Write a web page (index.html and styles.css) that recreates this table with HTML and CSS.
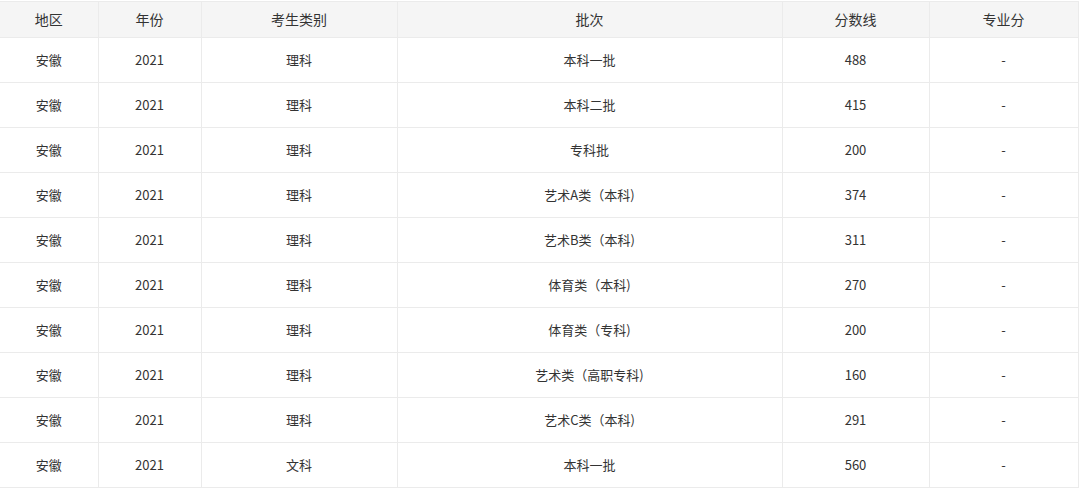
FILE: index.html
```html
<!DOCTYPE html>
<html lang="zh">
<head>
<meta charset="utf-8">
<link rel="stylesheet" href="styles.css">
</head>
<body>
<table class="score-table">
  <colgroup>
    <col class="c1"><col class="c2"><col class="c3"><col class="c4"><col class="c5"><col class="c6">
  </colgroup>
  <thead>
    <tr><th>地区</th><th>年份</th><th>考生类别</th><th>批次</th><th>分数线</th><th>专业分</th></tr>
  </thead>
  <tbody>
    <tr><td>安徽</td><td>2021</td><td>理科</td><td>本科一批</td><td>488</td><td>-</td></tr>
    <tr><td>安徽</td><td>2021</td><td>理科</td><td>本科二批</td><td>415</td><td>-</td></tr>
    <tr><td>安徽</td><td>2021</td><td>理科</td><td>专科批</td><td>200</td><td>-</td></tr>
    <tr><td>安徽</td><td>2021</td><td>理科</td><td>艺术A类（本科)</td><td>374</td><td>-</td></tr>
    <tr><td>安徽</td><td>2021</td><td>理科</td><td>艺术B类（本科)</td><td>311</td><td>-</td></tr>
    <tr><td>安徽</td><td>2021</td><td>理科</td><td>体育类（本科)</td><td>270</td><td>-</td></tr>
    <tr><td>安徽</td><td>2021</td><td>理科</td><td>体育类（专科)</td><td>200</td><td>-</td></tr>
    <tr><td>安徽</td><td>2021</td><td>理科</td><td>艺术类（高职专科)</td><td>160</td><td>-</td></tr>
    <tr><td>安徽</td><td>2021</td><td>理科</td><td>艺术C类（本科)</td><td>291</td><td>-</td></tr>
    <tr><td>安徽</td><td>2021</td><td>文科</td><td>本科一批</td><td>560</td><td>-</td></tr>
  </tbody>
</table>
</body>
</html>
```

FILE: styles.css
```css
html, body {
  margin: 0;
  padding: 0;
  background: #ffffff;
}
body {
  padding-top: 1px;
  font-family: "Noto Sans CJK SC", "Noto Sans", sans-serif;
  color: #333333;
}
.score-table {
  width: 1078px;
  border-collapse: collapse;
  table-layout: fixed;
}
.c1 { width: 98px; }
.c2 { width: 103px; }
.c3 { width: 196px; }
.c4 { width: 385px; }
.c5 { width: 147px; }
.c6 { width: 149px; }
.score-table th,
.score-table td {
  border: 1px solid #ebebeb;
  text-align: center;
  padding: 0;
  font-weight: normal;
}
.score-table tr > :first-child { border-left: none; }
.score-table th {
  height: 33px;
  padding-bottom: 2px;
  background: #f5f5f5;
  font-size: 14px;
  color: #333333;
}
.score-table td {
  height: 43px;
  padding-bottom: 1px;
  font-size: 13px;
  color: #333333;
}
```
